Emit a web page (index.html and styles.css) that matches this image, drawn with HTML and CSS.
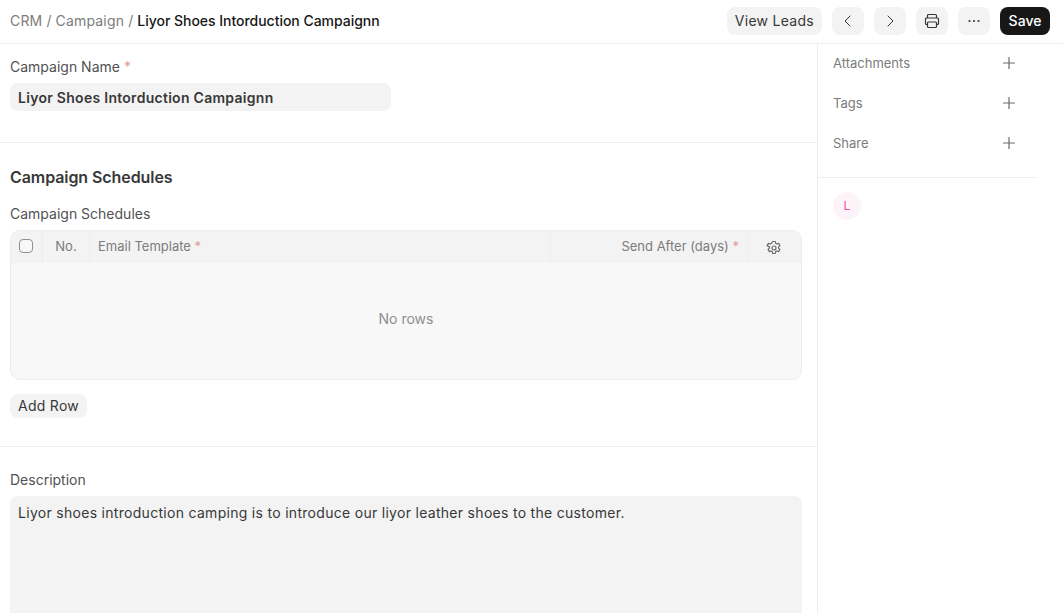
FILE: index.html
```html
<!DOCTYPE html>
<html lang="en">
<head>
<meta charset="utf-8">
<title>Campaign</title>
<link rel="stylesheet" href="styles.css">
</head>
<body>
<header class="topbar">
  <nav class="crumbs"><span>CRM</span><span class="sep">/</span><span>Campaign</span><span class="sep">/</span><span class="current">Liyor Shoes Intorduction Campaignn</span></nav>
  <div class="actions">
    <button class="btn">View Leads</button>
    <button class="btn icon" aria-label="Previous"><svg width="16" height="16" viewBox="0 0 16 16" fill="none" stroke="#383838" stroke-linecap="round" stroke-linejoin="round"><path d="M10 3 5 8l5 5"/></svg></button>
    <button class="btn icon" aria-label="Next"><svg width="16" height="16" viewBox="0 0 16 16" fill="none" stroke="#383838" stroke-linecap="round" stroke-linejoin="round"><path d="m6 3 5 5-5 5"/></svg></button>
    <button class="btn icon" aria-label="Print"><svg width="16" height="16" viewBox="0 0 16 16" fill="none" stroke="#383838" stroke-width="1.200" stroke-linejoin="round"><path d="M3.500 5V2.500a1 1 0 0 1 1-1h7a1 1 0 0 1 1 1V5"/><path d="M3.500 11.500H2.500a1 1 0 0 1-1-1V6a1 1 0 0 1 1-1h11a1 1 0 0 1 1 1v4.500a1 1 0 0 1-1 1h-1"/><rect x="3.500" y="9" width="9" height="5.500" rx="1"/></svg></button>
    <button class="btn icon" aria-label="Menu"><svg width="16" height="16" viewBox="0 0 16 16" fill="#383838"><circle cx="3.500" cy="8" r="1.100"/><circle cx="8" cy="8" r="1.100"/><circle cx="12.500" cy="8" r="1.100"/></svg></button>
    <button class="btn primary">Save</button>
  </div>
</header>
<div class="layout">
  <main class="form">
    <section class="section first">
      <label class="label">Campaign Name <span class="req">*</span></label>
      <div class="input">Liyor Shoes Intorduction Campaignn</div>
    </section>
    <section class="section schedules">
      <h2 class="heading">Campaign Schedules</h2>
      <label class="label">Campaign Schedules</label>
      <div class="grid">
        <div class="grid-head">
          <div class="cell check"><span class="box"></span></div>
          <div class="cell no">No.</div>
          <div class="cell template">Email Template <span class="req">*</span></div>
          <div class="cell after">Send After (days) <span class="req">*</span></div>
          <div class="cell gear"><svg width="16" height="16" viewBox="0 0 16 16" fill="none" stroke="#6b6b6b" stroke-width="1.200" stroke-linejoin="round"><path d="M6.700 1.500h2.600l.4 1.900 1.100.6 1.800-.6 1.300 2.200-1.400 1.300v1.200l1.400 1.300-1.300 2.200-1.800-.6-1.100.6-.4 1.900H6.700l-.4-1.900-1.100-.6-1.800.6-1.300-2.200 1.400-1.300V6.900L1.100 5.600l1.300-2.200 1.800.6 1.100-.6z"/><circle cx="8" cy="8" r="2"/></svg></div>
        </div>
        <div class="grid-empty">No rows</div>
      </div>
      <button class="add-row">Add Row</button>
    </section>
    <section class="section description">
      <label class="label">Description</label>
      <div class="textarea">Liyor shoes introduction camping is to introduce our liyor leather shoes to the customer.</div>
    </section>
  </main>
  <aside class="side">
    <div class="side-group">
      <div class="side-row"><span>Attachments</span><svg width="16" height="16" viewBox="0 0 16 16" stroke="#6b6b6b" stroke-width="1.200" stroke-linecap="round"><path d="M8 2.500v11M2.500 8h11"/></svg></div>
      <div class="side-row"><span>Tags</span><svg width="16" height="16" viewBox="0 0 16 16" stroke="#6b6b6b" stroke-width="1.200" stroke-linecap="round"><path d="M8 2.500v11M2.500 8h11"/></svg></div>
      <div class="side-row"><span>Share</span><svg width="16" height="16" viewBox="0 0 16 16" stroke="#6b6b6b" stroke-width="1.200" stroke-linecap="round"><path d="M8 2.500v11M2.500 8h11"/></svg></div>
    </div>
    <div class="side-users"><span class="avatar">L</span></div>
  </aside>
</div>
</body>
</html>
```
FILE: styles.css
```css
* { box-sizing: border-box; }
html, body { margin: 0; height: 100%; overflow: hidden; }
body { font-family: Inter, "Liberation Sans", sans-serif; font-size: 14px; color: #383838; background: #fff; }

.topbar { height: 44px; display: flex; align-items: center; justify-content: space-between; padding: 0 13px 2px 10px; border-bottom: 1px solid #ededed; }
.crumbs { display: flex; gap: 4px; font-size: 14px; color: #7c7c7c; letter-spacing: .012em; }
.crumbs .sep { color: #7c7c7c; }
.current { color: #171717; font-weight: 500; letter-spacing: -.002em; }
.actions { display: flex; gap: 10px; }
.btn { height: 28px; padding: 0 8px; border: 0; border-radius: 8px; background: #f3f3f3; color: #383838; font: 400 14px Inter, sans-serif; letter-spacing: .02em; display: flex; align-items: center; justify-content: center; }
.btn.icon { width: 32px; padding: 0; }
.btn.primary { width: 50px; padding: 0; background: #171717; color: #fff; font-weight: 500; letter-spacing: 0; }

.layout { display: flex; height: 569px; }
.form { width: 818px; border-right: 1px solid #ededed; flex: none; }
.section { padding: 0 15px 0 10px; border-bottom: 1px solid #ededed; }
.section.first { height: 99px; padding-top: 15px; }
.section.schedules { height: 304px; padding-top: 24px; }
.section.description { border-bottom: 0; padding-top: 25px; }
.label { display: block; height: 16px; line-height: 16px; font-size: 14px; color: #525252; margin-bottom: 8px; }
.req { color: #e79a9a; }
.input { width: 381px; height: 28px; line-height: 29px; padding: 0 8px; border-radius: 8px; background: #f3f3f3; font-weight: 600; color: #383838; letter-spacing: .02em; }
.heading { margin: 0 0 19px; height: 20px; line-height: 20px; font-size: 16px; font-weight: 600; letter-spacing: -.005em; color: #383838; }

.grid { width: 792px; height: 150px; border: 1px solid #ededed; border-radius: 10px; overflow: hidden; background: #f8f8f8; }
.grid-head { display: flex; height: 32px; background: #f3f3f3; font-size: 13px; color: #7c7c7c; }
.cell { display: flex; align-items: center; padding: 0 8px 2px; border-right: 1px solid #ededed; white-space: pre; }
.check { width: 32px; flex: none; padding: 0 0 2px 8px; }
.box { width: 14px; height: 14px; border: 1px solid #8f8f8f; border-radius: 4px; background: #f8f8f8; }
.no { width: 47px; flex: none; justify-content: center; }
.template { width: 461px; flex: none; }
.after { width: 197px; flex: none; justify-content: flex-end; }
.gear { flex: 1; border-right: 0; justify-content: center; padding: 2px 10px 0 8px; }
.grid-empty { height: 116px; display: flex; align-items: center; justify-content: center; color: #8f8f8f; padding-bottom: 6px; }
.add-row { display: block; margin-top: 14px; width: 77px; height: 24px; padding: 0 0 2px; border: 0; border-radius: 8px; background: #f3f3f3; color: #383838; font: 400 14px Inter, sans-serif; letter-spacing: .02em; }

.textarea { width: 792px; height: 140px; padding: 8px; border-radius: 8px; background: #f3f3f3; line-height: 18px; color: #383838; letter-spacing: .021em; }

.side { width: 219px; flex: none; }
.side-group { height: 134px; padding: 0 20px 0 15px; border-bottom: 1px solid #ededed; }
.side-row { height: 40px; padding-bottom: 2px; display: flex; align-items: center; justify-content: space-between; font-size: 13px; color: #7c7c7c; }
.side-users { padding: 14px 15px; }
.avatar { width: 28px; height: 28px; padding-bottom: 1px; border-radius: 50%; background: #fdf4fa; color: #ec4fa5; display: flex; align-items: center; justify-content: center; font-size: 12px; }
```
